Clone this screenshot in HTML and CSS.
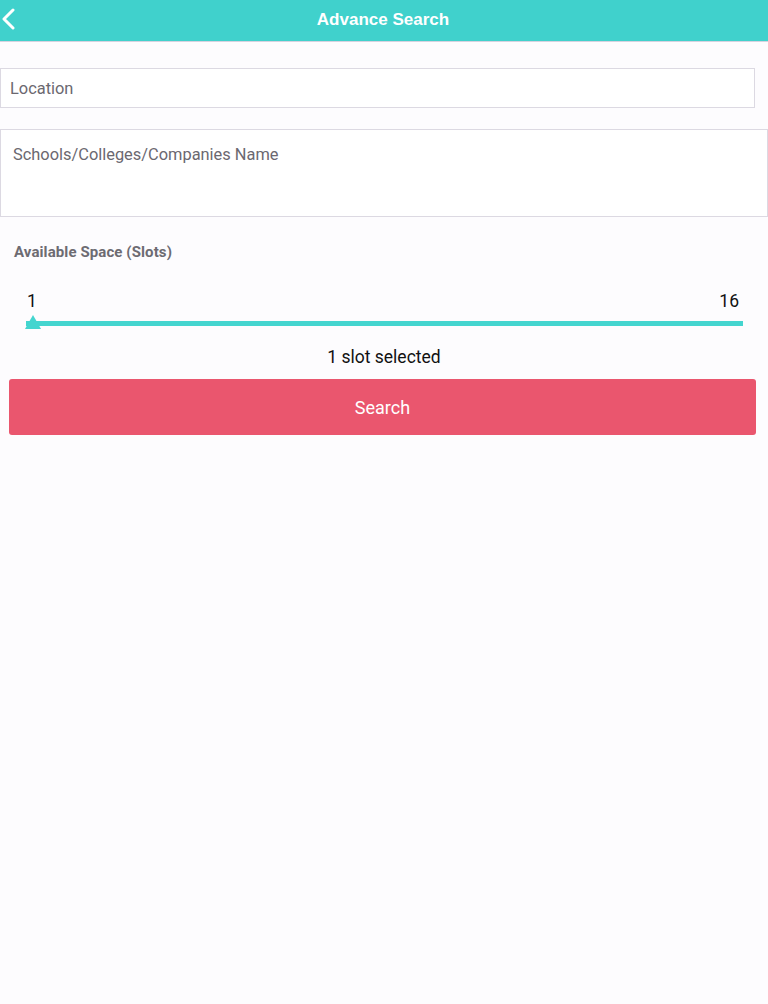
FILE: index.html
```html
<!DOCTYPE html>
<html>
<head>
	<meta http-equiv="Content-Type" content="text/html;charset=UTF-8">
	<title>Advance Search</title>
	<link rel="stylesheet" href="styles.css">
</head>
<body>
	<div class="header">
		<a href="javascript:;" class="backBtn">
			<svg width="16" height="22" viewBox="0 0 16 22">
				<polyline points="13,2 4,11 13,20" fill="none" stroke="#fff" stroke-width="3" stroke-linecap="round" stroke-linejoin="round"/>
			</svg>
		</a>
		<h1>Advance Search</h1>
	</div>

	<div class="form">
		<div class="field location">Location</div>
		<div class="field names">Schools/Colleges/Companies Name</div>

		<div class="label">Available Space (Slots)</div>

		<div class="range">
			<div class="range_nums">
				<span>1</span>
				<span>16</span>
			</div>
			<div class="track">
				<span class="thumb"></span>
			</div>
		</div>

		<div class="selected">1 slot selected</div>

		<a href="javascript:;" class="searchBtn">Search</a>
	</div>
</body>
</html>
```

FILE: styles.css
```css
*{
	margin: 0;
	padding: 0;
	box-sizing: border-box;
}
body{
	background-color: #fdfcfe;
	font-family: Roboto, "Liberation Sans", sans-serif;
}
.header{
	height: 42px;
	background-color: #40d1cc;
	display: flex;
	align-items: center;
	justify-content: center;
	position: relative;
	border-bottom: 1px solid #d6d3e0;
}
.header h1{
	font-family: "Liberation Sans", Arial, sans-serif;
	font-size: 17px;
	font-weight: bold;
	color: #fff;
	margin: -2px 0 0 -2px;
}
.header .backBtn{
	position: absolute;
	left: 0;
	top: 8px;
	display: block;
	width: 16px;
	height: 22px;
}
.form{
	padding-top: 26px;
}
.field{
	border: 1px solid #dcd9e2;
	background-color: #fff;
	color: #6b6870;
	font-size: 16.4px;
}
.field.location{
	width: 755px;
	height: 40px;
	padding: 10px 0 0 9px;
}
.field.names{
	margin-top: 21px;
	width: 768px;
	height: 88px;
	padding: 15px 0 0 12px;
}
.label{
	margin: 26px 0 0 14px;
	font-size: 15px;
	letter-spacing: 0.1px;
	font-weight: bold;
	color: #6d6b72;
}
.range{
	padding: 0 25px 0 26px;
	margin-top: 30px;
}
.range_nums{
	display: flex;
	justify-content: space-between;
	font-size: 17.5px;
	color: #111;
	padding: 0 4px 0 1px;
	line-height: 20px;
}
.track{
	position: relative;
	height: 5px;
	margin-top: 10px;
	background-color: #44d5cf;
}
.thumb{
	position: absolute;
	left: -1px;
	top: -6px;
	width: 0;
	height: 0;
	border-left: 8px solid transparent;
	border-right: 8px solid transparent;
	border-bottom: 14px solid #44d5cf;
}
.selected{
	text-align: center;
	font-size: 17.5px;
	color: #111;
	margin-top: 21px;
	line-height: 20px;
}
.searchBtn{
	display: flex;
	align-items: center;
	justify-content: center;
	margin: 12px 0 0 9px;
	width: 747px;
	height: 56px;
	border-radius: 3px;
	background-color: #ea566e;
	color: #fff;
	font-size: 18px;
	text-decoration: none;
}
```
